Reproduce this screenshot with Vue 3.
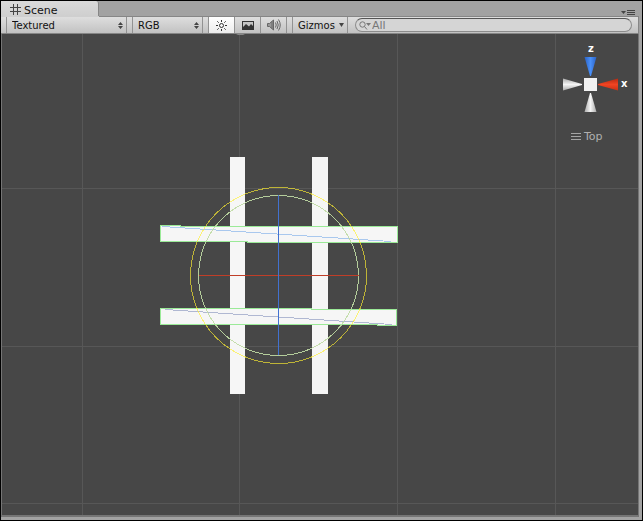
<script setup>
import { ref } from 'vue'

const drawMode = ref('Textured')
const colorMode = ref('RGB')
const lighting = ref(true)
const search = ref('')
const gridX = [82, 239, 397, 555]
const gridY = [188, 346, 503]
</script>

<template>
  <main class="window">
    <header class="tabs">
      <button class="tab" type="button">
        <svg class="tab-icon" width="12" height="12" viewBox="0 0 12 12" aria-hidden="true">
          <path d="M3.5 0v11M7.5 0v11M0 3.5h11M0 7.5h11" />
        </svg>
        <span>Scene</span>
      </button>
      <button class="menu" type="button" aria-label="Panel options">
        <svg width="14" height="7" viewBox="0 0 14 7" aria-hidden="true">
          <path d="M0 2h5L2.500 5z" fill="#444" />
          <path d="M6 1.500h8M6 3.500h8M6 5.500h8" stroke="#444" />
        </svg>
      </button>
    </header>

    <div class="toolbar">
      <label class="drop mode">
        <select v-model="drawMode" aria-label="Draw mode">
          <option>Textured</option>
          <option>Wireframe</option>
        </select>
        <svg width="5" height="7" viewBox="0 0 5 7" aria-hidden="true"><path d="M0 3h5L2.500 0zM0 4h5L2.500 7z" /></svg>
      </label>
      <label class="drop color">
        <select v-model="colorMode" aria-label="Render mode">
          <option>RGB</option>
          <option>Alpha</option>
        </select>
        <svg width="5" height="7" viewBox="0 0 5 7" aria-hidden="true"><path d="M0 3h5L2.500 0zM0 4h5L2.500 7z" /></svg>
      </label>
      <div class="toggles">
        <button type="button" :class="{ on: lighting }" aria-label="Scene lighting" @click="lighting = !lighting">
          <svg width="11" height="11" viewBox="0 0 11 11" fill="none" stroke="#333" aria-hidden="true">
            <circle cx="5.500" cy="5.500" r="2" />
            <path d="M5.500 0v2M5.500 9v2M0 5.500h2M9 5.500h2M1.300 1.300l1.400 1.400M8.300 8.300l1.400 1.400M9.700 1.300L8.300 2.700M2.700 8.300l-1.400 1.400" />
          </svg>
        </button>
        <button type="button" aria-label="Skybox">
          <svg width="12" height="9" viewBox="0 0 12 9" aria-hidden="true">
            <path d="M0 0h12v9H0z" fill="#333" />
            <path d="M1 1h10v4L9 3 7 5.500 4 3 1 6z" fill="#c4c4c4" />
          </svg>
        </button>
        <button type="button" aria-label="Audio">
          <svg width="14" height="12" viewBox="0 0 14 12" fill="none" stroke="#666" aria-hidden="true">
            <path d="M.5 4.500h2l4-3.500v10l-4-3.500h-2z" fill="#999" />
            <path d="M5 2.500v7" />
            <path d="M8.500 3.500q1.500 2.500 0 5M10 2q2.500 4 0 8M11.500.5q3.500 5.500 0 11" />
          </svg>
        </button>
      </div>
      <button class="gizmos" type="button">
        <span>Gizmos</span>
        <svg width="5" height="4" viewBox="0 0 5 4" aria-hidden="true"><path d="M0 0h5L2.500 4z" fill="#444" /></svg>
      </button>
      <label class="search">
        <svg width="12" height="9" viewBox="0 0 12 9" fill="none" stroke="#777" aria-hidden="true">
          <circle cx="3.500" cy="3.500" r="2.700" />
          <path d="M5.500 5.500l2.500 3" />
          <path d="M7 2h5L9.500 5z" fill="#777" stroke="none" />
        </svg>
        <input v-model="search" type="text" placeholder="All" aria-label="Search" />
      </label>
    </div>

    <section class="scene">
      <svg class="view" viewBox="2 34 636 481" preserveAspectRatio="xMidYMid slice" aria-label="Scene view">
        <g fill="#575757">
          <rect v-for="x in gridX" :key="'x' + x" :x="x" y="34" width="1" height="481" />
          <rect v-for="y in gridY" :key="'y' + y" x="2" :y="y" width="636" height="1" />
        </g>
        <path d="M236 34h9l-2 1h-5z" fill="#888" />
        <g fill="#f6f6f6">
          <rect x="230" y="157" width="15" height="237" />
          <rect x="312" y="157" width="16" height="237" />
        </g>
        <g fill="#f6f6f6" stroke="#9bea98" shape-rendering="crispEdges">
          <path d="M160.500 225.500H180.500V226.500H397.500V242.500H247.500V241.500H160.500z" />
          <path d="M160.500 308.500H311.500V309.500H396.500V325.500H377.500V324.500H160.500z" />
        </g>
        <g fill="none" shape-rendering="crispEdges">
          <path d="M162 226.500L391 241.500" stroke="#a9c8ee" />
          <path d="M165 309.500L392 324.500" stroke="#b0b8d2" />
          <circle cx="278.500" cy="275.500" r="88" stroke="#fff030" stroke-opacity=".65" />
          <circle cx="278.500" cy="275.500" r="80" stroke="#c0dca4" stroke-opacity=".9" />
        </g>
        <rect x="199" y="275" width="160" height="1" fill="#c03e28" />
        <rect x="278" y="195" width="1" height="160" fill="#4272d0" />
      </svg>

      <div class="orientation">
        <svg width="68" height="70" viewBox="562 44 68 70" aria-label="Orientation">
          <defs>
            <linearGradient id="blue"><stop stop-color="#2b62c4" /><stop offset=".5" stop-color="#4a90f8" /><stop offset="1" stop-color="#2b62c4" /></linearGradient>
            <linearGradient id="red" x2="0" y2="1"><stop stop-color="#b52a12" /><stop offset=".5" stop-color="#f04422" /><stop offset="1" stop-color="#c93014" /></linearGradient>
            <linearGradient id="whiteV"><stop stop-color="#aaa" /><stop offset=".5" stop-color="#f5f5f5" /><stop offset="1" stop-color="#aaa" /></linearGradient>
            <linearGradient id="whiteH" x2="0" y2="1"><stop stop-color="#aaa" /><stop offset=".5" stop-color="#f5f5f5" /><stop offset="1" stop-color="#aaa" /></linearGradient>
          </defs>
          <path d="M584.500 57H596.500L591 76H590z" fill="url(#blue)" />
          <path d="M563 78.500V90.500L582 85V84z" fill="url(#whiteH)" />
          <path d="M618 78.500V90.500L598 85V84z" fill="url(#red)" />
          <path d="M584.500 112H596.500L591 93H590z" fill="url(#whiteV)" />
          <rect x="584" y="78" width="13" height="13" fill="#f1f1f1" />
          <text x="588" y="52">z</text>
          <text x="621" y="87">x</text>
        </svg>
        <button class="view-name" type="button">
          <svg width="10" height="9" viewBox="0 0 10 9" aria-hidden="true"><path d="M0 1.500h10M0 4.500h10M0 7.500h10" stroke="#a5a5a5" /></svg>
          <span>Top</span>
        </button>
      </div>
    </section>
  </main>
</template>

<style>
body {
  margin: 0;
}
</style>

<style scoped>
.window {
  box-sizing: border-box;
  min-height: 100vh;
  display: flex;
  flex-direction: column;
  padding-bottom: 3px;
  border: 1px solid #000;
  background: #a2a2a2;
  font-family: "DejaVu Sans", sans-serif;
  font-size: 10px;
  color: #111;
}
button,
select,
input {
  appearance: none;
  margin: 0;
  padding: 0;
  border: 0;
  border-radius: 0;
  background: none;
  color: inherit;
  font: inherit;
}
svg {
  display: block;
  flex: none;
}
.tabs {
  display: flex;
  justify-content: space-between;
  align-items: flex-end;
  height: 15px;
}
.tab {
  box-sizing: border-box;
  display: flex;
  align-items: center;
  gap: 2px;
  width: 98px;
  height: 15px;
  padding: 2px 8px 0 9px;
  border-right: 1px solid #868686;
  border-top-right-radius: 3px;
  background: linear-gradient(#dadada, #cfcfcf);
  box-shadow: 0 1px #cfcfcf;
  z-index: 1;
  font-size: 11px;
}
.tab span {
  padding-top: 1px;
}
.tab-icon path {
  stroke: #444;
}
.menu {
  padding: 0 7px 0 0;
}
.toolbar {
  box-sizing: border-box;
  display: flex;
  gap: 5px;
  height: 18px;
  margin-right: 3px;
  padding-left: 5px;
  border: solid #868686;
  border-width: 1px 1px 1px 0;
  background: linear-gradient(#dedede, #c2c2c2);
}
.drop,
.toggles,
.gizmos {
  box-sizing: border-box;
  border: solid #929292;
  border-width: 0 1px;
}
.drop {
  display: flex;
  align-items: center;
  padding-right: 3px;
}
.drop select {
  flex: 1;
  min-width: 0;
  height: 16px;
  padding: 1px 0 0 5px;
}
.drop path {
  fill: #444;
}
.mode {
  width: 121px;
}
.color {
  width: 71px;
}
.toggles {
  display: flex;
  width: 79px;
}
.toggles button {
  flex: 1;
  display: flex;
  align-items: center;
  justify-content: center;
}
.toggles button + button {
  border-left: 1px solid #929292;
}
.toggles .on {
  background: linear-gradient(#fff, #ececec);
}
.gizmos {
  display: flex;
  justify-content: space-between;
  width: 56px;
  padding: 3px 3px 0 5px;
}
.gizmos svg {
  margin-top: 3px;
}
.search {
  box-sizing: border-box;
  flex: 1;
  display: flex;
  align-items: center;
  gap: 1px;
  height: 14px;
  margin: 1px 6px 0 2px;
  padding-left: 3px;
  border: 1px solid #8c8c8c;
  border-top-color: #555;
  border-radius: 7px;
  background: #d5d5d5;
}
.search input {
  flex: 1;
  min-width: 0;
  height: 12px;
  font-size: 11px;
  outline: 0;
}
.search input::placeholder {
  color: #777;
  opacity: 1;
}
.scene {
  position: relative;
  flex: 1;
  display: flex;
  min-height: 240px;
  margin-right: 3px;
  border: solid #757575;
  border-width: 0 1px 2px;
  background: #474747;
}
.view {
  flex: 1;
  width: 100%;
  min-width: 0;
}
.orientation {
  position: absolute;
  top: 10px;
  right: 8px;
  display: flex;
  flex-direction: column;
  gap: 16px;
}
.orientation text {
  fill: #fff;
  font-size: 10px;
  font-weight: bold;
}
.view-name {
  display: flex;
  align-items: center;
  gap: 3px;
  padding-left: 9px;
  color: #b0b0b0;
  font-size: 11px;
}
</style>
